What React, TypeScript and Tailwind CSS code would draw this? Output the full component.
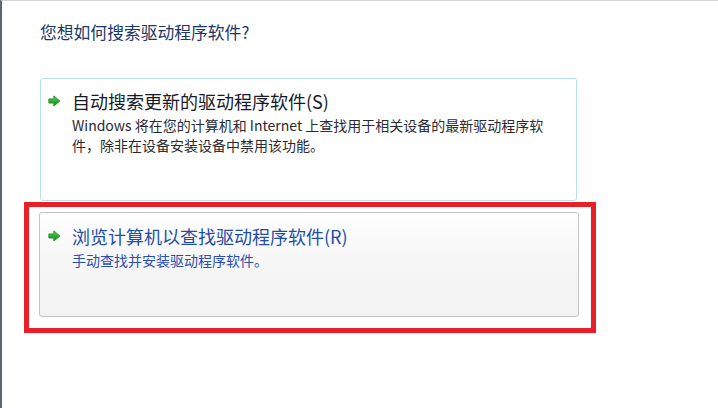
import React from "react";

const cjk = { fontFamily: '"Noto Sans CJK SC", "Noto Sans", sans-serif' };

function GreenArrow({ id }: { id: string }) {
  return (
    <svg width="13" height="12" viewBox="0 0 12 11" className="shrink-0">
      <defs>
        <linearGradient id={id} x1="0" y1="0" x2="0" y2="1">
          <stop offset="0" stopColor="#6fd96a" />
          <stop offset="0.5" stopColor="#2fae2f" />
          <stop offset="1" stopColor="#178a1c" />
        </linearGradient>
      </defs>
      <path
        d="M0.8 3.6 H5.4 V0.8 L11 5.5 L5.4 10.2 V7.4 H0.8 Z"
        fill={`url(#${id})`}
        stroke="#1f8a23"
        strokeWidth="0.8"
        strokeLinejoin="round"
      />
    </svg>
  );
}

export default function App() {
  return (
    <div
      className="w-[718px] h-[408px] overflow-hidden bg-white border-l-2 border-l-[#5c6870] border-t border-t-[#d0d4d7] pl-[22px] pt-[20px]"
      style={cjk}
    >
      {/* Main instruction */}
      <h1 className="ml-[16px] text-[16.8px] leading-[22px] text-[#1b3768] font-normal">
        您想如何搜索驱动程序软件?
      </h1>

      {/* Option 1 */}
      <div className="ml-[16px] mt-[35px] w-[537px] h-[123px] rounded-[3px] border border-[#b6e1ec] bg-white pl-[7px] pt-[10px]">
        <div className="flex items-center">
          <GreenArrow id="a1" />
          <span className="ml-[11px] text-[18px] leading-[24px] text-[#181a2a]">
            自动搜索更新的驱动程序软件(S)
          </span>
        </div>
        <p className="ml-[24px] mt-[2px] text-[14px] leading-[20px] text-[#2a2a32] whitespace-nowrap">
          Windows 将在您的计算机和 Internet 上查找用于相关设备的最新驱动程序软
          <br />
          件，除非在设备安装设备中禁用该功能。
        </p>
      </div>

      {/* Option 2, highlighted */}
      <div className="mt-[1px] w-[572px] h-[131px] border-[5px] border-[#e81f26] pl-[10px] pt-[5px]">
        <div className="w-[540px] h-[105px] rounded-[3px] border border-[#c4c4c4] bg-linear-to-b from-[#fefefe] via-[#f6f6f6] to-[#f2f2f2] pl-[8px] pt-[11px]">
          <div className="flex items-center">
            <GreenArrow id="a2" />
            <span className="ml-[11px] text-[18px] leading-[24px] text-[#1f4ea6]">
              浏览计算机以查找驱动程序软件(R)
            </span>
          </div>
          <p className="ml-[24px] mt-[2px] text-[14px] leading-[20px] text-[#2a4db5]">
            手动查找并安装驱动程序软件。
          </p>
        </div>
      </div>
    </div>
  );
}
